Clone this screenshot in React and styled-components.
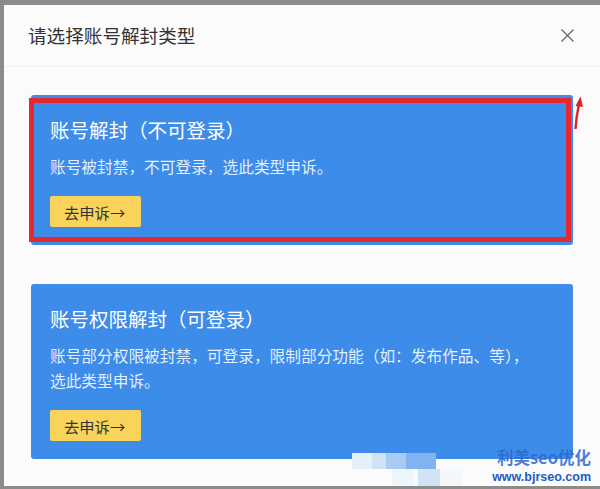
import React from 'react';
import styled, { createGlobalStyle } from 'styled-components';

const GlobalStyle = createGlobalStyle`
  html, body {
    margin: 0;
    padding: 0;
    background: #8b8b8b;
  }
  body {
    font-family: "Noto Sans CJK SC", "Noto Sans", sans-serif;
  }
`;

const Page = styled.div`
  position: relative;
  width: 600px;
  height: 489px;
  box-sizing: border-box;
  padding: 5px 0 3px 4px;
  overflow: hidden;
`;

const Dialog = styled.div`
  height: 100%;
  background: #fbfbfc;
  display: flex;
  flex-direction: column;
`;

const Header = styled.div`
  height: 61px;
  flex-shrink: 0;
  display: flex;
  align-items: center;
  justify-content: space-between;
  padding: 0 25px 0 24px;
  border-bottom: 1px solid #efeff2;
`;

const Title = styled.h2`
  margin: 0;
  font-size: 18.6px;
  font-weight: 400;
  color: #333;
  line-height: 1;
`;

const Close = styled.button`
  border: 0;
  background: none;
  padding: 0;
  width: 15px;
  height: 15px;
  display: flex;
  cursor: pointer;
`;

const Body = styled.div`
  display: flex;
  flex-direction: column;
  gap: 39px;
  padding: 28px 27px 0 27px;
`;

const Card = styled.div`
  position: relative;
  background: #3e8ce9;
  border-radius: 3px;
  padding: 22px 30px 18px 19px;
  color: #fff;
`;

const Outline = styled.div`
  position: absolute;
  top: 3px;
  left: -2px;
  right: 2px;
  bottom: 3px;
  border: 5px solid #e8262d;
  pointer-events: none;
`;

const CardTitle = styled.h3`
  margin: 0;
  font-size: 19.5px;
  font-weight: 400;
  line-height: 26px;
`;

const CardText = styled.p`
  margin: 11px 0 0;
  font-size: 15.7px;
  line-height: 25px;
  color: rgba(255, 255, 255, 0.88);
`;

const Action = styled.button`
  margin-top: 17px;
  display: block;
  width: 91px;
  height: 31px;
  padding: 0 0 0 14px;
  border: 0;
  border-radius: 2px;
  background: #f9d35b;
  color: #333;
  font-family: inherit;
  font-size: 15.3px;
  text-align: left;
  cursor: pointer;
`;

const Pointer = styled.svg`
  position: absolute;
  left: 573px;
  top: 95px;
`;

const Mark = styled.div`
  position: absolute;
  right: 9px;
  bottom: 5px;
  display: flex;
  flex-direction: column;
  align-items: flex-end;
  gap: 5px;
`;

const MarkName = styled.span`
  font-family: "Noto Sans CJK SC", sans-serif;
  font-weight: 700;
  font-size: 16.5px;
  line-height: 17px;
  color: rgba(44, 104, 206, 0.85);
`;

const MarkUrl = styled.span`
  font-family: "Liberation Sans", Arial, sans-serif;
  font-weight: 700;
  font-size: 12.5px;
  line-height: 13px;
  color: #1f5bc2;
`;

const Patch = styled.div`
  position: absolute;
  left: ${(p) => p.$x}px;
  top: ${(p) => p.$y}px;
  width: ${(p) => p.$w}px;
  height: ${(p) => p.$h}px;
  background: ${(p) => p.$c};
`;

const patches = [
  { x: 352, y: 453, w: 20, h: 16, c: '#e4f1fb' },
  { x: 372, y: 453, w: 14, h: 16, c: '#cfe4f7' },
  { x: 386, y: 453, w: 20, h: 16, c: '#a8cbf3' },
  { x: 406, y: 453, w: 30, h: 16, c: '#80b3ef' },
  { x: 392, y: 469, w: 22, h: 17, c: '#eef5fb' },
  { x: 418, y: 469, w: 22, h: 17, c: '#d2e3f4' },
  { x: 440, y: 469, w: 22, h: 17, c: '#f3f7fb' },
];

const cards = [
  {
    title: '账号解封（不可登录）',
    text: '账号被封禁，不可登录，选此类型申诉。',
    marked: true,
  },
  {
    title: '账号权限解封（可登录）',
    text: '账号部分权限被封禁，可登录，限制部分功能（如：发布作品、等），选此类型申诉。',
  },
];

export default function App() {
  return (
    <>
      <GlobalStyle />
      <Page>
        <Dialog>
          <Header>
            <Title>请选择账号解封类型</Title>
            <Close aria-label="关闭">
              <svg width="15" height="15" viewBox="0 0 15 15">
                <path d="M1.5 1.5 L13.5 13.5 M13.5 1.5 L1.5 13.5" stroke="#666" strokeWidth="1.3" fill="none" />
              </svg>
            </Close>
          </Header>
          <Body>
            {cards.map((c) => (
              <Card key={c.title}>
                <CardTitle>{c.title}</CardTitle>
                <CardText>{c.text}</CardText>
                <Action>去申诉→</Action>
                {c.marked && <Outline />}
              </Card>
            ))}
          </Body>
        </Dialog>
        <Pointer width="12" height="36" viewBox="0 0 12 36">
          <path d="M2.5 34 C3 24 4.5 16 6 9" stroke="#e02028" strokeWidth="2.4" fill="none" />
          <path d="M2.5 11 L7.5 1.5 L10 12 Z" fill="#e02028" />
        </Pointer>
        {patches.map((p, i) => (
          <Patch key={i} $x={p.x} $y={p.y} $w={p.w} $h={p.h} $c={p.c} />
        ))}
        <Mark>
          <MarkName>利美seo优化</MarkName>
          <MarkUrl>www.bjrseo.com</MarkUrl>
        </Mark>
      </Page>
    </>
  );
}
